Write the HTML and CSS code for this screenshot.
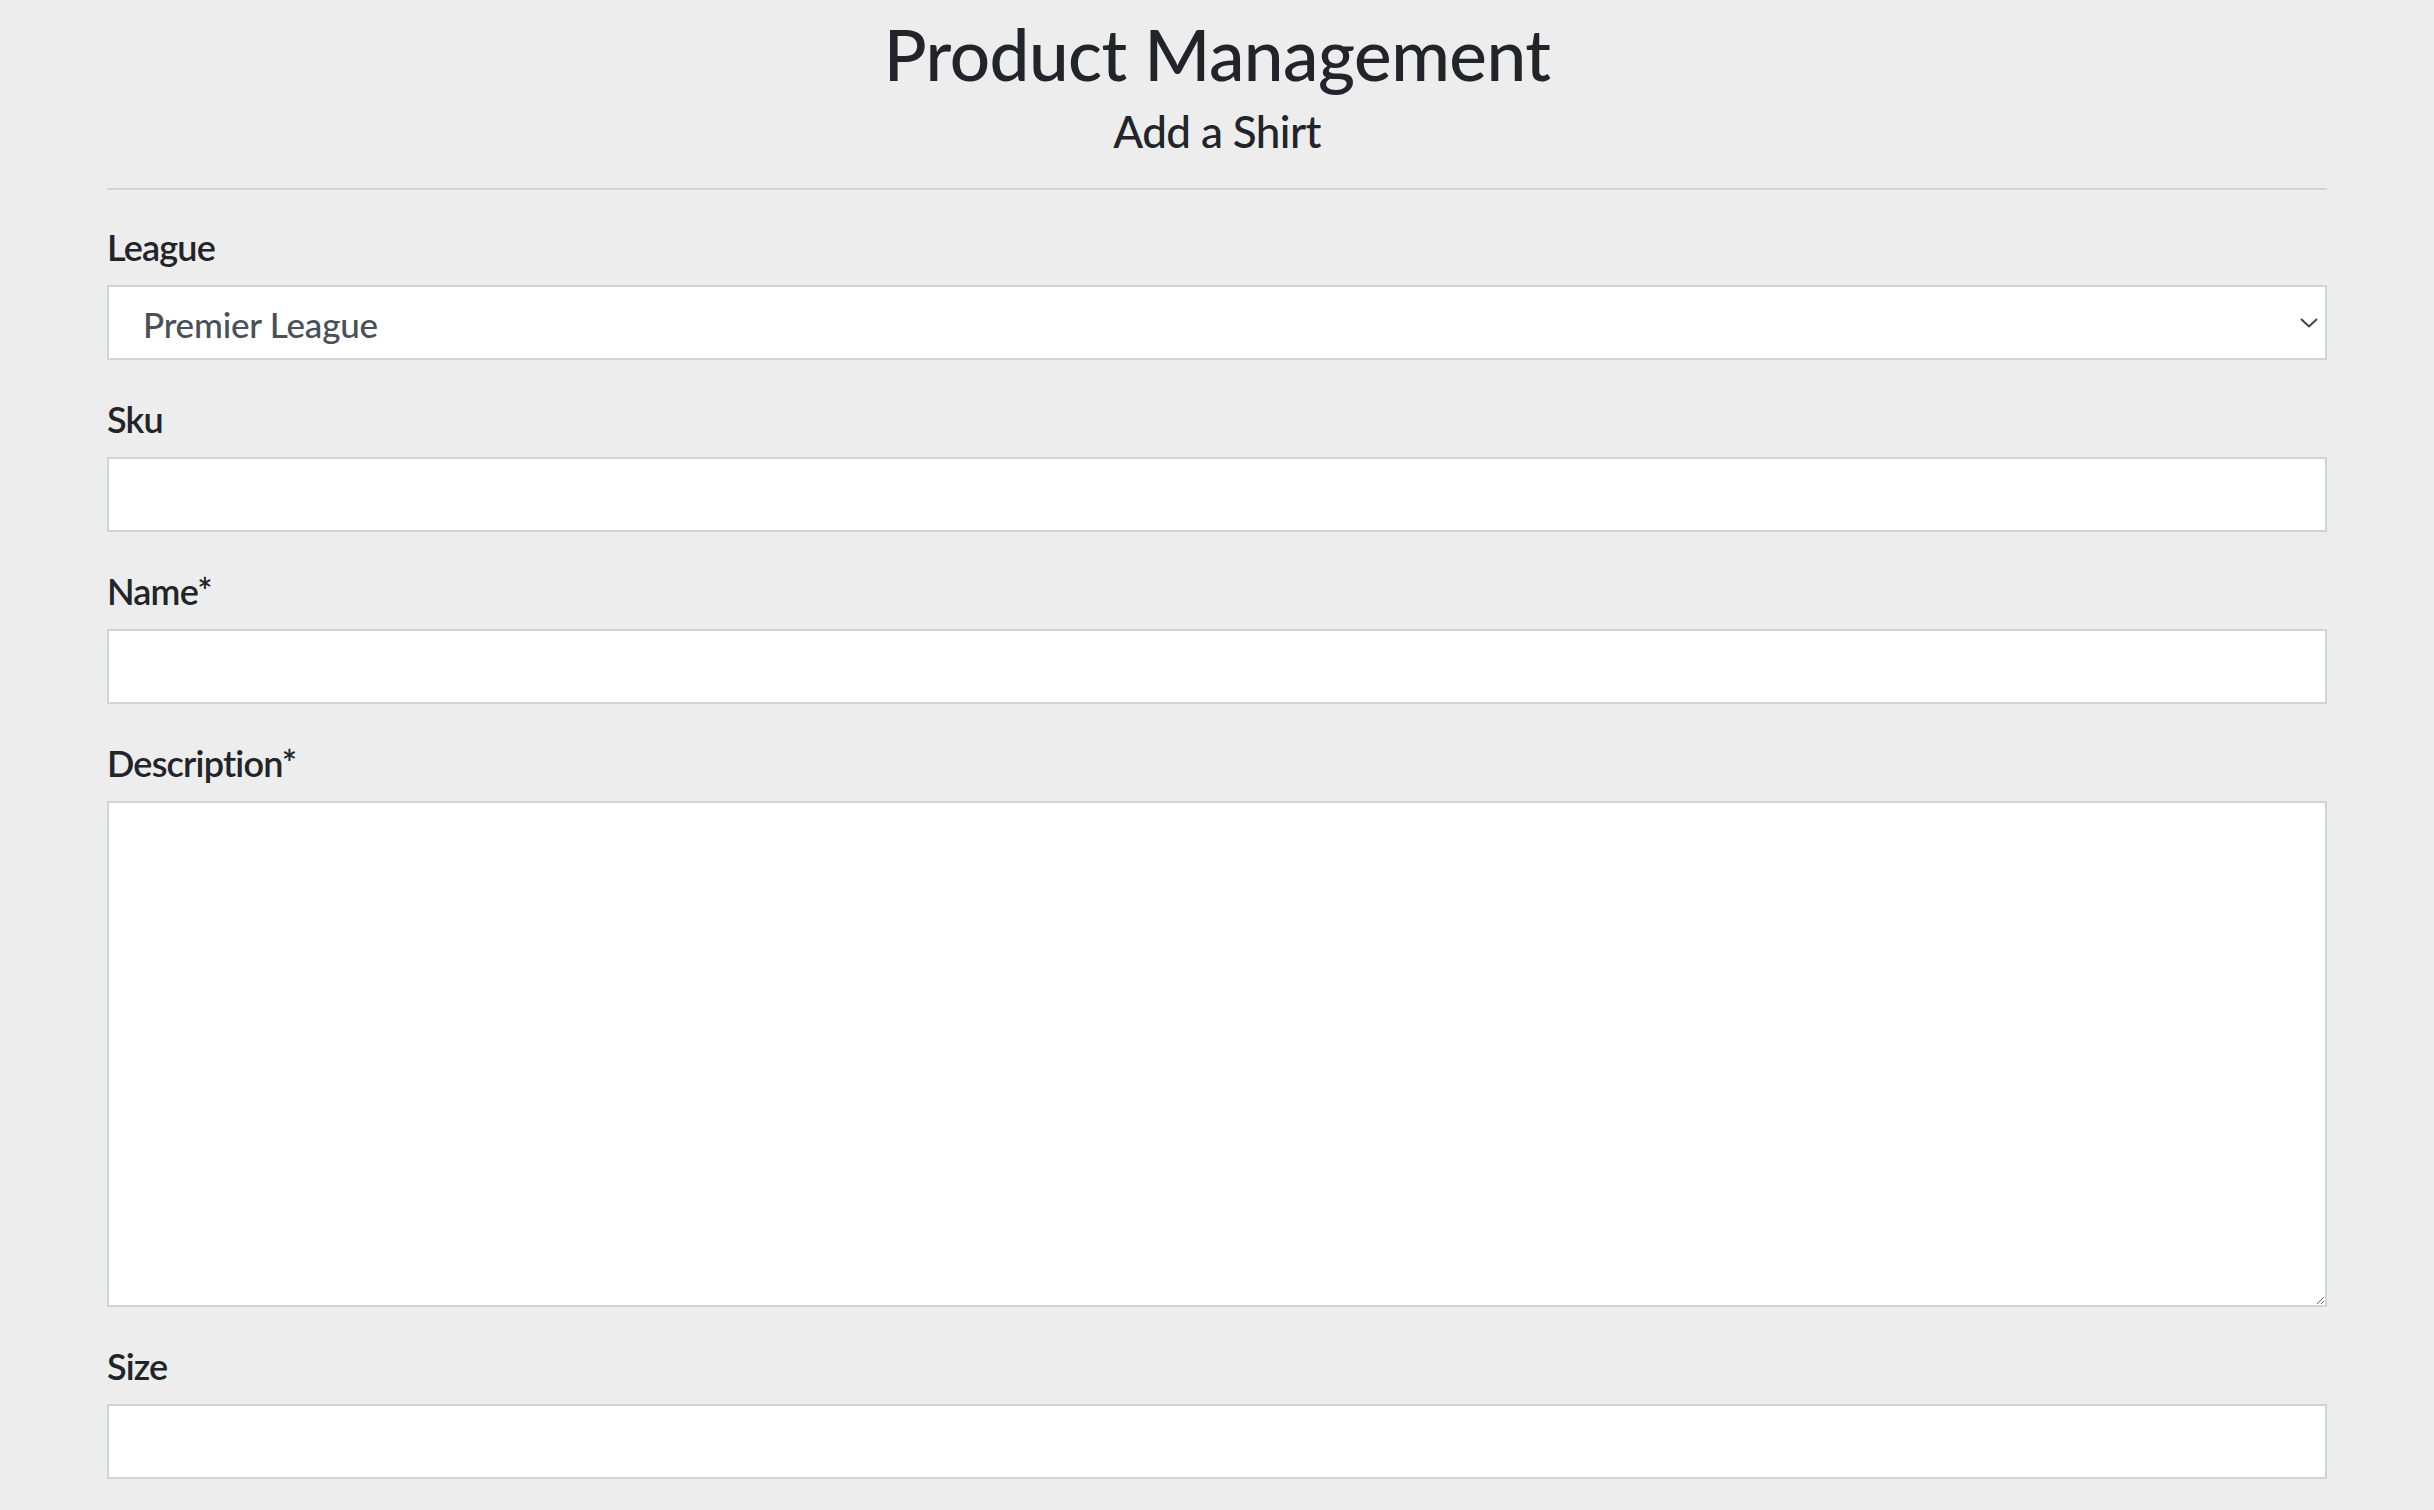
FILE: index.html
```html
<!DOCTYPE html>
<html lang="en">
<head>
<meta charset="utf-8">
<title>Product Management</title>
<link rel="stylesheet" href="styles.css">
</head>
<body>
<div class="container">
  <header class="page-head">
    <h1 class="title">Product Management</h1>
    <h2 class="subtitle">Add a Shirt</h2>
  </header>
  <hr class="divider">
  <form class="form">
    <div class="field">
      <label class="label" for="league">League</label>
      <div class="select-wrap">
        <select id="league" class="control select">
          <option>Premier League</option>
        </select>
        <svg class="chevron" width="18" height="10" viewBox="0 0 18 10"><path d="M1 1 L9 8.5 L17 1" fill="none" stroke="#3c4147" stroke-width="2"/></svg>
      </div>
    </div>
    <div class="field">
      <label class="label" for="sku">Sku</label>
      <input id="sku" class="control" type="text">
    </div>
    <div class="field">
      <label class="label" for="name">Name*</label>
      <input id="name" class="control" type="text">
    </div>
    <div class="field">
      <label class="label" for="desc">Description*</label>
      <textarea id="desc" class="control textarea"></textarea>
    </div>
    <div class="field">
      <label class="label" for="size">Size</label>
      <input id="size" class="control" type="text">
    </div>
  </form>
</div>
</body>
</html>
```

FILE: styles.css
```css
html, body {
  margin: 0;
  padding: 0;
  background: #ededed;
}
body {
  font-family: "Lato", "Source Sans Pro", "Noto Sans", sans-serif;
  color: #212529;
  overflow: hidden;
}
.container {
  width: 2220px;
  margin: 0 auto;
  padding-top: 11px;
}
.page-head {
  display: flex;
  flex-direction: column;
  align-items: center;
}
.title {
  margin: 0;
  font-size: 71px;
  line-height: 86px;
  font-weight: 500;
  letter-spacing: -0.5px;
}
.subtitle {
  margin: 7px 0 0;
  font-size: 44px;
  line-height: 55px;
  font-weight: 500;
  letter-spacing: -0.6px;
}
.divider {
  margin: 29px 0 0;
  border: 0;
  border-top: 2px solid rgba(0,0,0,0.1);
  height: 0;
}
.form {
  display: flex;
  flex-direction: column;
  padding-top: 33px;
}
.field {
  display: flex;
  flex-direction: column;
  margin-bottom: 35px;
}
.label {
  font-size: 36px;
  line-height: 44px;
  font-weight: 600;
  letter-spacing: -0.8px;
  padding-top: 2px;
  margin-bottom: 16px;
}
.control {
  box-sizing: border-box;
  width: 100%;
  height: 75px;
  margin: 0;
  border: 2px solid #ced4da;
  border-radius: 0;
  background: #fff;
  font-family: inherit;
  font-size: 35px;
  letter-spacing: -0.2px;
  color: #495057;
  padding: 2px 34px 0;
  outline: none;
}
.select-wrap {
  position: relative;
}
.select {
  -webkit-appearance: none;
  appearance: none;
  display: block;
  font-weight: 500;
}
.chevron {
  position: absolute;
  right: 9px;
  top: 33px;
}
.textarea {
  height: 506px;
  resize: both;
  padding: 12px 34px;
}
```
